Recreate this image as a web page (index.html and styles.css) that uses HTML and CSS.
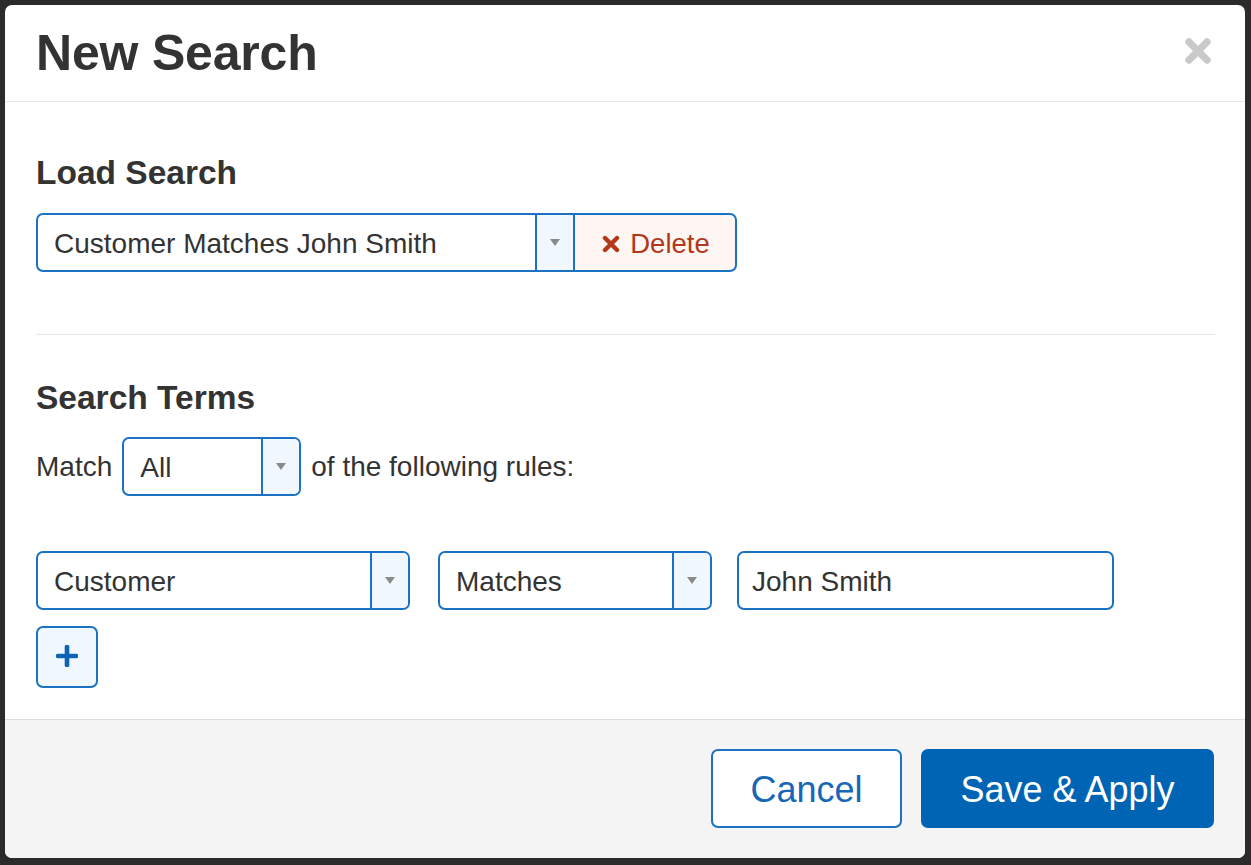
FILE: index.html
```html
<!DOCTYPE html>
<html>
<head>
<meta charset="utf-8">
<title>New Search</title>
<link rel="stylesheet" href="styles.css">
</head>
<body>
<div class="modal">
  <div class="modal-header">
    <h1 class="modal-title">New Search</h1>
    <button class="close" aria-label="Close">
      <svg width="28" height="28" viewBox="0 0 28 28"><path d="M5 5 L23 23 M23 5 L5 23" stroke="#c9c9c9" stroke-width="7.4" stroke-linecap="round"/></svg>
    </button>
  </div>
  <div class="modal-body">
    <h2 class="section-title">Load Search</h2>
    <div class="load-row">
      <div class="select select-load">
        <span class="select-value">Customer Matches John Smith</span>
        <span class="select-arrow"><span class="tri"></span></span>
      </div>
      <button class="btn-delete">
        <svg width="18" height="18" viewBox="0 0 18 18"><path d="M3 3 L15 15 M15 3 L3 15" stroke="#b3381a" stroke-width="4.4" stroke-linecap="round"/></svg>
        <span>Delete</span>
      </button>
    </div>
    <hr class="divider">
    <h2 class="section-title">Search Terms</h2>
    <div class="match-row">
      <span>Match</span>
      <div class="select select-all">
        <span class="select-value">All</span>
        <span class="select-arrow"><span class="tri"></span></span>
      </div>
      <span>of the following rules:</span>
    </div>
    <div class="rule-row">
      <div class="select select-field">
        <span class="select-value">Customer</span>
        <span class="select-arrow"><span class="tri"></span></span>
      </div>
      <div class="select select-op">
        <span class="select-value">Matches</span>
        <span class="select-arrow"><span class="tri"></span></span>
      </div>
      <div class="input">John Smith</div>
    </div>
    <button class="btn-add" aria-label="Add rule">
      <svg width="22" height="22" viewBox="0 0 22 22"><path d="M11 2 V20 M2 11 H20" stroke="#0e63b3" stroke-width="4.6" stroke-linecap="round"/></svg>
    </button>
  </div>
  <div class="modal-footer">
    <button class="btn btn-cancel">Cancel</button>
    <button class="btn btn-primary">Save &amp; Apply</button>
  </div>
</div>
</body>
</html>
```
FILE: styles.css
```css
* { box-sizing: border-box; }

html, body {
  margin: 0;
  padding: 0;
}

body {
  background: #2b2b2b;
  width: 1251px;
  height: 865px;
  overflow: hidden;
  padding: 5px 0 0 5px;
  font-family: "Liberation Sans", Arial, Helvetica, sans-serif;
  color: #333;
}

.modal {
  width: 1240px;
  background: #fff;
  border-radius: 7px;
  overflow: hidden;
  display: flex;
  flex-direction: column;
}

.modal-header {
  height: 97px;
  border-bottom: 1px solid #e8e8e8;
  display: flex;
  align-items: center;
  justify-content: space-between;
  padding: 0 31px 0 31px;
}

.modal-title {
  margin: 0;
  font-size: 50px;
  font-weight: bold;
  color: #333;
  line-height: 60px;
  letter-spacing: -0.2px;
}

.close {
  border: 0;
  background: none;
  padding: 0;
  margin: -4px 2px 0 0;
  width: 28px;
  height: 28px;
  display: flex;
}

.modal-body {
  padding: 51px 30px 31px 31px;
  display: flex;
  flex-direction: column;
  align-items: flex-start;
}

.section-title {
  margin: 0;
  font-size: 33.5px;
  font-weight: bold;
  line-height: 40px;
  height: 40px;
  color: #333;
}

.load-row {
  margin-top: 20px;
  display: flex;
  height: 59px;
}

.select {
  display: flex;
  height: 59px;
  border: 2px solid #1c72c2;
  border-radius: 7px;
  background: #fff;
  align-items: stretch;
  font-size: 28px;
}

.select-value {
  flex: 1;
  display: flex;
  align-items: center;
  padding-left: 16px;
  padding-top: 3px;
  white-space: nowrap;
  color: #333;
}

.select-arrow {
  width: 38px;
  border-left: 2px solid #1c72c2;
  background: #f0f7fe;
  display: flex;
  align-items: center;
  justify-content: center;
  border-radius: 0 5px 5px 0;
}

.tri {
  width: 0;
  height: 0;
  border-left: 5px solid transparent;
  border-right: 5px solid transparent;
  border-top: 7px solid #8a8a8a;
}

.select-load {
  width: 539px;
  border-radius: 7px 0 0 7px;
}

.select-load .select-arrow {
  border-radius: 0;
}

.btn-delete {
  width: 162px;
  height: 59px;
  border: 2px solid #1c72c2;
  border-left: 0;
  border-radius: 0 7px 7px 0;
  background: #fdf6f3;
  color: #b3381a;
  font-family: inherit;
  font-size: 27.5px;
  display: flex;
  align-items: center;
  justify-content: center;
  gap: 10px;
  padding: 2px 0 0 2px;
}

.divider {
  align-self: stretch;
  border: 0;
  height: 1px;
  background: #e6e6e6;
  margin: 62px 0 43px 0;
}

.match-row {
  margin-top: 19px;
  display: flex;
  align-items: center;
  gap: 10px;
  font-size: 28px;
}

.select-all {
  width: 179px;
}

.rule-row {
  margin-top: 55px;
  display: flex;
  align-items: center;
}

.select-field {
  width: 374px;
}

.select-op {
  width: 274px;
  margin-left: 28px;
}

.input {
  width: 377px;
  height: 59px;
  margin-left: 25px;
  border: 2px solid #1c72c2;
  border-radius: 7px;
  font-size: 28px;
  display: flex;
  align-items: center;
  padding: 3px 0 0 13px;
  color: #333;
}

.btn-add {
  margin-top: 16px;
  width: 62px;
  height: 62px;
  border: 2px solid #1c72c2;
  border-radius: 7px;
  background: #f0f7fe;
  display: flex;
  align-items: center;
  justify-content: center;
  padding: 0 0 3px 0;
}

.modal-footer {
  height: 139px;
  border-top: 1px solid #dedede;
  background: #f4f4f4;
  display: flex;
  justify-content: flex-end;
  align-items: center;
  gap: 19px;
  padding: 0 31px 2px 0;
}

.btn {
  height: 79px;
  border-radius: 7px;
  font-family: inherit;
  font-size: 36px;
  display: flex;
  align-items: center;
  justify-content: center;
  padding: 4px 0 0 0;
}

.btn-cancel {
  width: 191px;
  background: #fff;
  border: 2px solid #1c72c2;
  color: #1766b7;
}

.btn-primary {
  width: 293px;
  background: #0064b4;
  border: 2px solid #0064b4;
  color: #fff;
}
```
